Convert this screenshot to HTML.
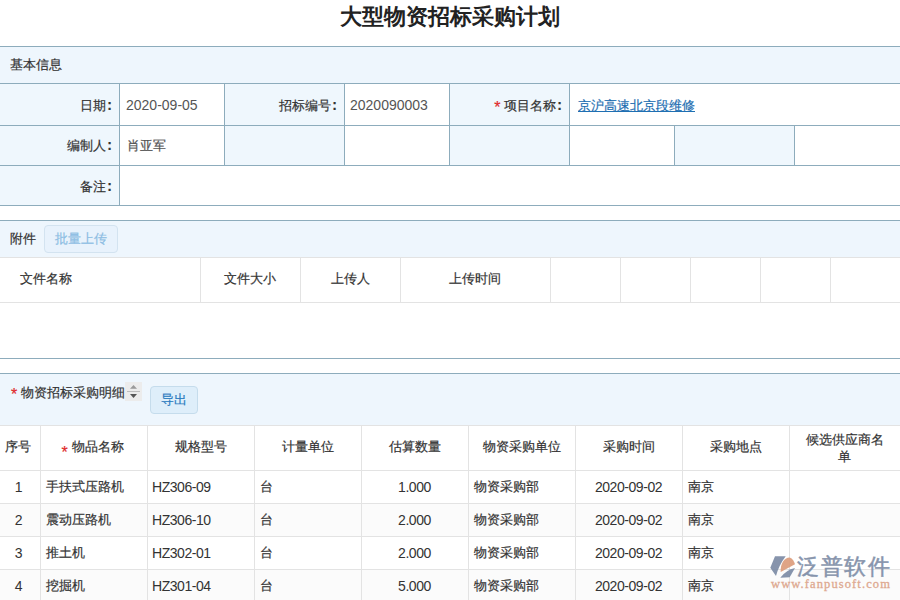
<!DOCTYPE html>
<html><head><meta charset="utf-8">
<style>
*{margin:0;padding:0;box-sizing:border-box}
html,body{width:900px;height:600px;overflow:hidden;background:#fff}
body{position:relative;font-family:"Liberation Sans",sans-serif;font-size:13px;color:#333}
.a{position:absolute}
.hl{position:absolute;height:1px;left:0;width:900px}
.vl{position:absolute;width:1px}
.tb{background:#8dacbc}
.gr{background:#e3e3e3}
.band{position:absolute;left:0;width:900px;background:#eef6fd}
.lbl{position:absolute;background:#eff7fd}
.t{position:absolute;white-space:nowrap;line-height:16px;-webkit-text-stroke:0.2px currentColor}
.r{color:#e4393c}
.st{display:inline-block;color:#e02a2a;font-size:16px;position:relative;top:3px;width:10px;text-align:left}
.v{color:#555}
.n{font-size:14px}
</style></head><body>
<div class="t" style="left:0px;width:900px;text-align:center;top:4px;font-size:22px;line-height:26px;font-weight:bold;color:#222;-webkit-text-stroke:0">大型物资招标采购计划</div>
<div class="a" style="left:0px;top:47px;width:900px;height:36px;background:#eef6fd"></div>
<div class="hl tb" style="top:46px;left:0px;width:900px"></div>
<div class="hl tb" style="top:83px;left:0px;width:900px"></div>
<div class="t" style="left:10px;top:57px;">基本信息</div>
<div class="a" style="left:0px;top:84px;width:119px;height:121px;background:#eff7fd"></div>
<div class="a" style="left:225px;top:84px;width:119px;height:81px;background:#eff7fd"></div>
<div class="a" style="left:450px;top:84px;width:119px;height:81px;background:#eff7fd"></div>
<div class="a" style="left:675px;top:126px;width:119px;height:39px;background:#eff7fd"></div>
<div class="hl tb" style="top:125px;left:0px;width:900px"></div>
<div class="hl tb" style="top:165px;left:0px;width:900px"></div>
<div class="hl tb" style="top:205px;left:0px;width:900px"></div>
<div class="vl tb" style="left:119px;top:84px;height:121px"></div>
<div class="vl tb" style="left:224px;top:84px;height:81px"></div>
<div class="vl tb" style="left:344px;top:84px;height:81px"></div>
<div class="vl tb" style="left:449px;top:84px;height:81px"></div>
<div class="vl tb" style="left:569px;top:84px;height:81px"></div>
<div class="vl tb" style="left:674px;top:126px;height:39px"></div>
<div class="vl tb" style="left:794px;top:126px;height:39px"></div>
<div class="t" style="left:0px;width:112px;text-align:right;top:97px;">日期<span style="margin-left:1px;font-weight:bold;font-size:14px">:</span></div>
<div class="t" style="left:126px;top:97px;font-size:14px;color:#555;-webkit-text-stroke:0">2020-09-05</div>
<div class="t" style="left:225px;width:112px;text-align:right;top:97px;">招标编号<span style="margin-left:1px;font-weight:bold;font-size:14px">:</span></div>
<div class="t" style="left:350px;top:97px;font-size:14px;color:#555;-webkit-text-stroke:0">2020090003</div>
<div class="t" style="left:450px;width:112px;text-align:right;top:97px;"><span class="st">*</span>项目名称<span style="margin-left:1px;font-weight:bold;font-size:14px">:</span></div>
<div class="t" style="left:578px;top:98px;color:#1f6fb2;text-decoration:underline">京沪高速北京段维修</div>
<div class="t" style="left:0px;width:112px;text-align:right;top:137px;">编制人<span style="margin-left:1px;font-weight:bold;font-size:14px">:</span></div>
<div class="t" style="left:127px;top:138px;color:#555">肖亚军</div>
<div class="t" style="left:0px;width:112px;text-align:right;top:178px;">备注<span style="margin-left:1px;font-weight:bold;font-size:14px">:</span></div>
<div class="a" style="left:0px;top:221px;width:900px;height:36px;background:#eef6fd"></div>
<div class="hl tb" style="top:220px;left:0px;width:900px"></div>
<div class="hl gr" style="top:257px;left:0px;width:900px"></div>
<div class="t" style="left:10px;top:231px;">附件</div>
<div class="a" style="left:44px;top:225px;width:74px;height:28px;border:1px solid #d3e3f0;border-radius:4px;background:#e8f2fc"></div>
<div class="t" style="left:55px;top:231px;color:#8cbde3">批量上传</div>
<div class="hl gr" style="top:302px;left:0px;width:900px"></div>
<div class="vl gr" style="left:200px;top:258px;height:44px"></div>
<div class="vl gr" style="left:300px;top:258px;height:44px"></div>
<div class="vl gr" style="left:400px;top:258px;height:44px"></div>
<div class="vl gr" style="left:550px;top:258px;height:44px"></div>
<div class="vl gr" style="left:620px;top:258px;height:44px"></div>
<div class="vl gr" style="left:690px;top:258px;height:44px"></div>
<div class="vl gr" style="left:760px;top:258px;height:44px"></div>
<div class="vl gr" style="left:830px;top:258px;height:44px"></div>
<div class="t" style="left:20px;top:271px;">文件名称</div>
<div class="t" style="left:200px;width:100px;text-align:center;top:271px;">文件大小</div>
<div class="t" style="left:300px;width:100px;text-align:center;top:271px;">上传人</div>
<div class="t" style="left:400px;width:150px;text-align:center;top:271px;">上传时间</div>
<div class="hl tb" style="top:358px;left:0px;width:900px"></div>
<div class="a" style="left:0px;top:374px;width:900px;height:51px;background:#eef6fd"></div>
<div class="hl tb" style="top:373px;left:0px;width:900px"></div>
<div class="hl gr" style="top:425px;left:0px;width:900px"></div>
<div class="t" style="left:11px;top:384px;"><span class="st">*</span>物资招标采购明细</div>
<svg class="a" style="left:125px;top:382px" width="17" height="19" viewBox="0 0 17 19"><rect width="17" height="19" fill="#ececec"/><path d="M5 6.8 L8.5 3 L12 6.8Z" fill="#9a9a9a"/><rect x="2" y="9" width="13" height="1" fill="#bdbdbd"/><path d="M5 12 L12 12 L8.5 16Z" fill="#555"/></svg>
<div class="a" style="left:150px;top:386px;width:48px;height:28px;border:1px solid #c5dcec;border-radius:4px;background:#deeefa"></div>
<div class="t" style="left:161px;top:392px;color:#2b7bbf">导出</div>
<div class="a" style="left:0px;top:504px;width:900px;height:32px;background:#fbfbfb"></div>
<div class="a" style="left:0px;top:570px;width:900px;height:32px;background:#fbfbfb"></div>
<div class="hl gr" style="top:470px;left:0px;width:900px"></div>
<div class="hl gr" style="top:503px;left:0px;width:900px"></div>
<div class="hl gr" style="top:536px;left:0px;width:900px"></div>
<div class="hl gr" style="top:569px;left:0px;width:900px"></div>
<div class="vl gr" style="left:40px;top:426px;height:174px"></div>
<div class="vl gr" style="left:147px;top:426px;height:174px"></div>
<div class="vl gr" style="left:254px;top:426px;height:174px"></div>
<div class="vl gr" style="left:361px;top:426px;height:174px"></div>
<div class="vl gr" style="left:468px;top:426px;height:174px"></div>
<div class="vl gr" style="left:575px;top:426px;height:174px"></div>
<div class="vl gr" style="left:682px;top:426px;height:174px"></div>
<div class="vl gr" style="left:789px;top:426px;height:174px"></div>
<div class="t" style="left:0px;width:40px;text-align:center;top:439px;text-indent:-4px">序号</div>
<div class="t" style="left:39px;width:107px;text-align:center;top:438px;"><span class="st" style="top:7px">*</span>物品名称</div>
<div class="t" style="left:147px;width:107px;text-align:center;top:439px;">规格型号</div>
<div class="t" style="left:254px;width:107px;text-align:center;top:439px;">计量单位</div>
<div class="t" style="left:361px;width:107px;text-align:center;top:439px;">估算数量</div>
<div class="t" style="left:468px;width:107px;text-align:center;top:439px;">物资采购单位</div>
<div class="t" style="left:575px;width:107px;text-align:center;top:439px;">采购时间</div>
<div class="t" style="left:682px;width:107px;text-align:center;top:439px;">采购地点</div>
<div class="t" style="left:789px;width:111px;text-align:center;top:431px;white-space:normal;line-height:17px">候选供应商名<br>单</div>
<div class="t" style="left:-1px;width:39px;text-align:center;top:479px;font-size:14px;letter-spacing:-0.45px;-webkit-text-stroke:0">1</div>
<div class="t" style="left:46px;top:479px;">手扶式压路机</div>
<div class="t" style="left:152px;top:479px;font-size:14px;letter-spacing:-0.45px;-webkit-text-stroke:0">HZ306-09</div>
<div class="t" style="left:260px;top:479px;">台</div>
<div class="t" style="left:361px;width:107px;text-align:center;top:479px;font-size:14px;letter-spacing:-0.45px;-webkit-text-stroke:0">1.000</div>
<div class="t" style="left:474px;top:479px;">物资采购部</div>
<div class="t" style="left:575px;width:107px;text-align:center;top:479px;font-size:14px;letter-spacing:-0.45px;-webkit-text-stroke:0">2020-09-02</div>
<div class="t" style="left:688px;top:479px;">南京</div>
<div class="t" style="left:-1px;width:39px;text-align:center;top:512px;font-size:14px;letter-spacing:-0.45px;-webkit-text-stroke:0">2</div>
<div class="t" style="left:46px;top:512px;">震动压路机</div>
<div class="t" style="left:152px;top:512px;font-size:14px;letter-spacing:-0.45px;-webkit-text-stroke:0">HZ306-10</div>
<div class="t" style="left:260px;top:512px;">台</div>
<div class="t" style="left:361px;width:107px;text-align:center;top:512px;font-size:14px;letter-spacing:-0.45px;-webkit-text-stroke:0">2.000</div>
<div class="t" style="left:474px;top:512px;">物资采购部</div>
<div class="t" style="left:575px;width:107px;text-align:center;top:512px;font-size:14px;letter-spacing:-0.45px;-webkit-text-stroke:0">2020-09-02</div>
<div class="t" style="left:688px;top:512px;">南京</div>
<div class="t" style="left:-1px;width:39px;text-align:center;top:545px;font-size:14px;letter-spacing:-0.45px;-webkit-text-stroke:0">3</div>
<div class="t" style="left:46px;top:545px;">推土机</div>
<div class="t" style="left:152px;top:545px;font-size:14px;letter-spacing:-0.45px;-webkit-text-stroke:0">HZ302-01</div>
<div class="t" style="left:260px;top:545px;">台</div>
<div class="t" style="left:361px;width:107px;text-align:center;top:545px;font-size:14px;letter-spacing:-0.45px;-webkit-text-stroke:0">2.000</div>
<div class="t" style="left:474px;top:545px;">物资采购部</div>
<div class="t" style="left:575px;width:107px;text-align:center;top:545px;font-size:14px;letter-spacing:-0.45px;-webkit-text-stroke:0">2020-09-02</div>
<div class="t" style="left:688px;top:545px;">南京</div>
<div class="t" style="left:-1px;width:39px;text-align:center;top:578px;font-size:14px;letter-spacing:-0.45px;-webkit-text-stroke:0">4</div>
<div class="t" style="left:46px;top:578px;">挖掘机</div>
<div class="t" style="left:152px;top:578px;font-size:14px;letter-spacing:-0.45px;-webkit-text-stroke:0">HZ301-04</div>
<div class="t" style="left:260px;top:578px;">台</div>
<div class="t" style="left:361px;width:107px;text-align:center;top:578px;font-size:14px;letter-spacing:-0.45px;-webkit-text-stroke:0">5.000</div>
<div class="t" style="left:474px;top:578px;">物资采购部</div>
<div class="t" style="left:575px;width:107px;text-align:center;top:578px;font-size:14px;letter-spacing:-0.45px;-webkit-text-stroke:0">2020-09-02</div>
<div class="t" style="left:688px;top:578px;">南京</div>
<svg class="a" style="left:765px;top:548px;opacity:0.92" width="135" height="52" viewBox="0 0 135 52"><path d="M10,8.3 L20.7,8.3 Q14,17 11,28 L5.3,19.7 Z" fill="#7d8ca6"/><path d="M15.7,24 C15.2,16 19,9.6 24.7,9.5 C27.5,10.5 29.3,13.5 30,16.2 L15.7,24 Z" fill="#dd9d7c"/><path d="M30,20 L24.7,29.3 L15.3,29.7 Q21,22 30,20 Z" fill="#7d8ca6"/></svg>
<div class="t" style="left:797px;top:555px;font-size:21.5px;line-height:24px;letter-spacing:1.6px;color:#7d8ca6;-webkit-text-stroke:0.5px #7d8ca6;opacity:0.92">泛普软件</div>
<div class="t" style="left:771px;top:577px;font-family:'Liberation Serif',serif;font-size:12.5px;line-height:14px;color:#dba287;-webkit-text-stroke:0.3px #dba287;letter-spacing:1.1px;opacity:0.92">www.fanpusoft.com</div>
</body></html>
